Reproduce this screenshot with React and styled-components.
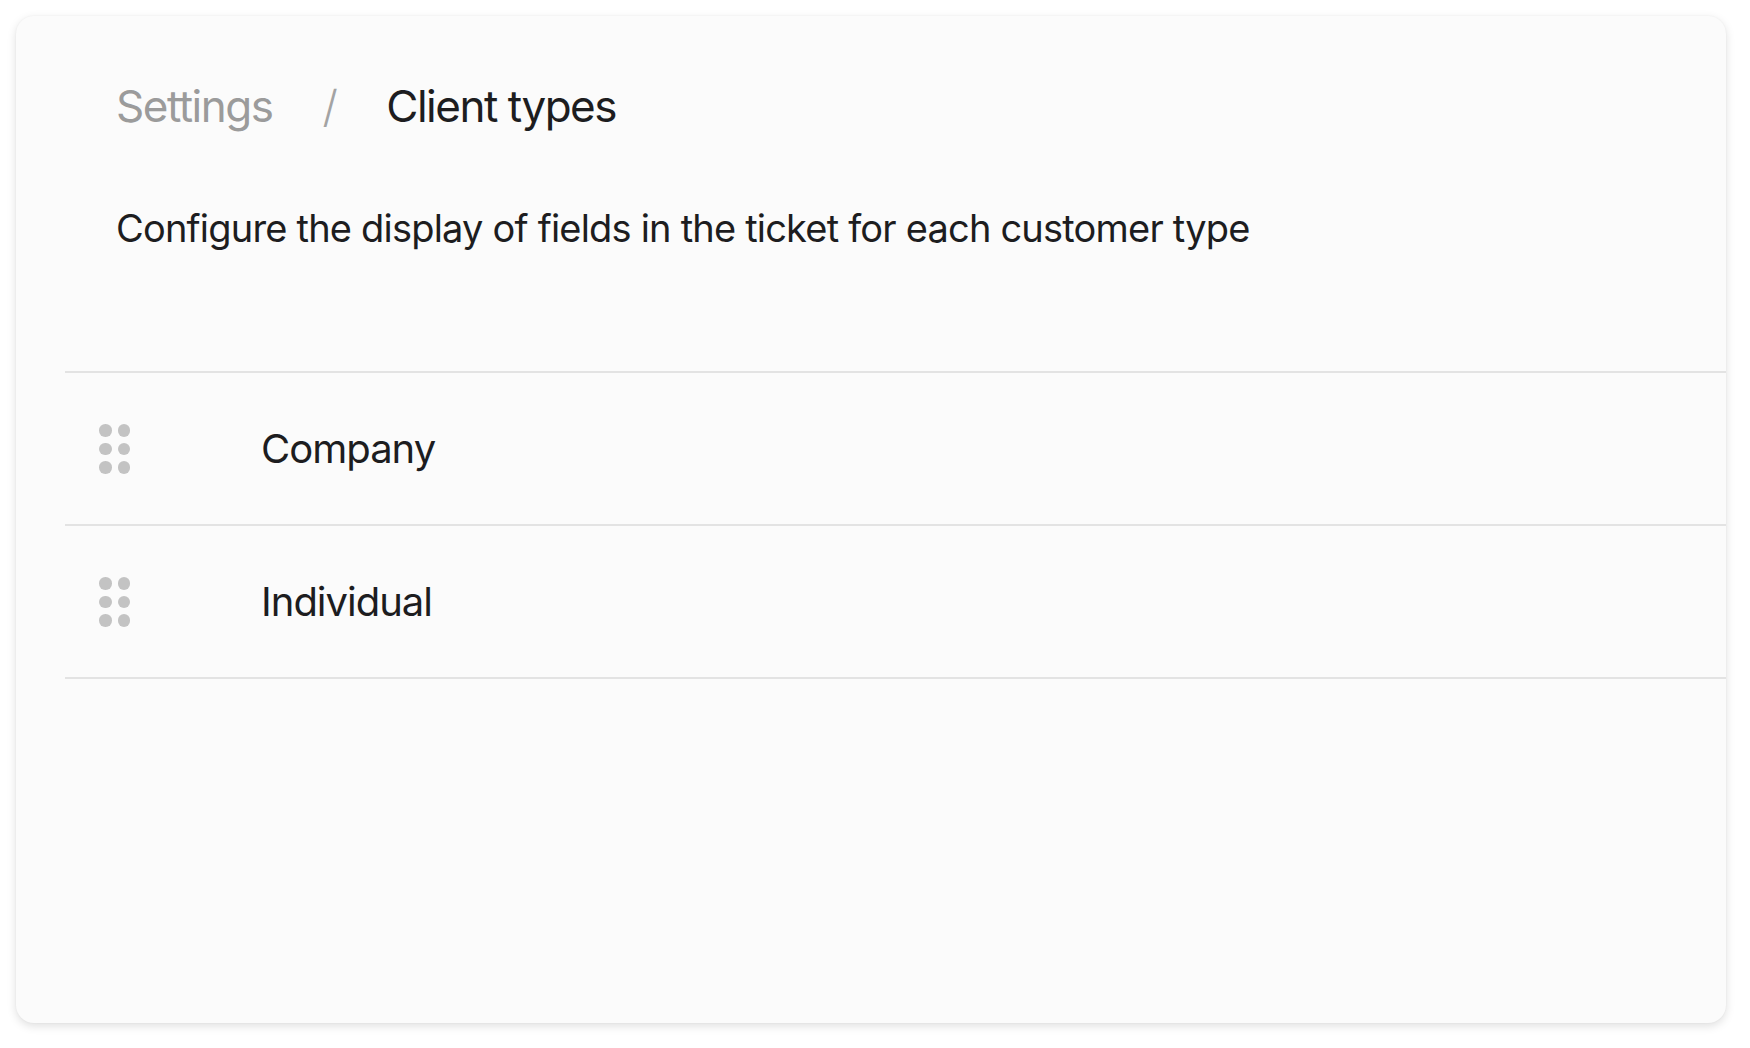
import React from "react";
import styled, { createGlobalStyle } from "styled-components";

const Global = createGlobalStyle`
  html, body { margin: 0; padding: 0; background: #ffffff; }
  body { font-family: Inter, "Noto Sans", "Liberation Sans", sans-serif; -webkit-font-smoothing: antialiased; }
`;

const Page = styled.div`
  padding: 16px 24px 25px 16px;
`;

const Card = styled.div`
  width: 1710px;
  height: 1007px;
  box-sizing: border-box;
  background: #fbfbfb;
  border-radius: 18px;
  box-shadow: 0 3px 10px rgba(0, 0, 0, 0.13), 0 0 2px rgba(0, 0, 0, 0.05);
  padding-top: 64px;
  overflow: hidden;
`;

const Header = styled.div`
  padding-left: 100px;
`;

const Crumbs = styled.div`
  display: flex;
  align-items: baseline;
  gap: 50px;
  font-size: 44px;
  line-height: 53px;
  letter-spacing: -1.5px;
`;

const Crumb = styled.span`
  color: ${(p) => (p.$current ? "#1d1d1f" : "#9b9b9b")};
`;

const Slash = styled.span`
  color: #a3a3a3;
  font-weight: 300;
`;

const Description = styled.p`
  margin: 72px 0 0;
  font-size: 38px;
  line-height: 46px;
  letter-spacing: -0.8px;
  color: #1d1d1f;
`;

const List = styled.div`
  margin: 120px 0 0 49px;
  border-top: 2px solid #e3e3e3;
`;

const Row = styled.div`
  display: grid;
  grid-template-columns: 30px 1fr;
  column-gap: 132px;
  align-items: center;
  height: 151px;
  padding-left: 34px;
  border-bottom: 2px solid #e3e3e3;
`;

const Handle = styled.div`
  display: grid;
  grid-template-columns: repeat(2, 12px);
  grid-auto-rows: 12px;
  column-gap: 6.5px;
  row-gap: 6.5px;
`;

const Dot = styled.span`
  width: 12.5px;
  height: 12.5px;
  border-radius: 50%;
  background: #c3c3c3;
`;

const Label = styled.span`
  font-size: 40px;
  letter-spacing: -1px;
  color: #1d1d1f;
`;

const types = ["Company", "Individual"];

export default function App() {
  return (
    <>
      <Global />
      <Page>
        <Card>
          <Header>
            <Crumbs>
              <Crumb>Settings</Crumb>
              <Slash>/</Slash>
              <Crumb $current>Client types</Crumb>
            </Crumbs>
            <Description>
              Configure the display of fields in the ticket for each customer type
            </Description>
          </Header>
          <List>
            {types.map((t) => (
              <Row key={t}>
                <Handle>
                  {Array.from({ length: 6 }).map((_, i) => (
                    <Dot key={i} />
                  ))}
                </Handle>
                <Label>{t}</Label>
              </Row>
            ))}
          </List>
        </Card>
      </Page>
    </>
  );
}
